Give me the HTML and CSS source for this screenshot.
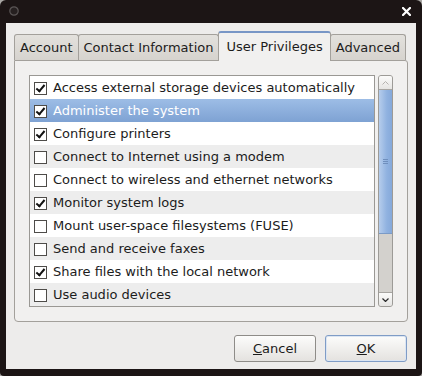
FILE: index.html
```html
<!DOCTYPE html>
<html lang="en">
<head>
  <meta charset="UTF-8" />
  <title>User Privileges</title>
  <link rel="stylesheet" href="styles.css">
</head>
<body>
  <div class="window">
    <div class="titlebar">
      <svg class="menu-icon" width="10" height="10" viewBox="0 0 10 10">
        <circle cx="5" cy="5" r="4.2" fill="#262020" stroke="#5a5555" stroke-width="1.2"/>
      </svg>
      <svg class="close-icon" width="9" height="9" viewBox="0 0 9 9">
        <path d="M1 1 L8 8 M8 1 L1 8" stroke="#fff" stroke-width="2.2" stroke-linecap="square"/>
      </svg>
    </div>

    <div class="dialog">
      <div class="notebook">
        <div class="tabs">
          <div class="tab">Account</div>
          <div class="tab">Contact Information</div>
          <div class="tab active">User Privileges</div>
          <div class="tab">Advanced</div>
        </div>

        <div class="panel">
          <div class="list">
            <div class="row"><span class="check on"></span>Access external storage devices automatically</div>
            <div class="row selected"><span class="check on"></span>Administer the system</div>
            <div class="row"><span class="check on"></span>Configure printers</div>
            <div class="row"><span class="check"></span>Connect to Internet using a modem</div>
            <div class="row"><span class="check"></span>Connect to wireless and ethernet networks</div>
            <div class="row"><span class="check on"></span>Monitor system logs</div>
            <div class="row"><span class="check"></span>Mount user-space filesystems (FUSE)</div>
            <div class="row"><span class="check"></span>Send and receive faxes</div>
            <div class="row"><span class="check on"></span>Share files with the local network</div>
            <div class="row"><span class="check"></span>Use audio devices</div>
          </div>

          <div class="scrollbar">
            <div class="arrow up">
              <svg width="7" height="4" viewBox="0 0 7 4"><path d="M0.5 3.5 L3.5 0.5 L6.5 3.5" fill="none" stroke="#b4b2ae" stroke-width="1"/></svg>
            </div>
            <div class="thumb"><span class="grip"></span></div>
            <div class="trough"></div>
            <div class="arrow down">
              <svg width="7" height="4" viewBox="0 0 7 4"><path d="M0.5 0.5 L3.5 3.5 L6.5 0.5" fill="none" stroke="#2a2a2a" stroke-width="1.2"/></svg>
            </div>
          </div>
        </div>
      </div>

      <div class="buttons">
        <button class="btn"><u>C</u>ancel</button>
        <button class="btn default"><u>O</u>K</button>
      </div>
    </div>
  </div>
</body>
</html>
```

FILE: styles.css
```css
* { margin: 0; padding: 0; box-sizing: border-box; }
body { background: #a9a7a4; font-family: 'DejaVu Sans', sans-serif; font-size: 13px; color: #1c1c1c; }

.window {
  width: 422px;
  height: 376px;
  background: #1c1515;
  border-radius: 6px 6px 4px 4px;
  padding: 0 6px 7px;
  display: flex;
  flex-direction: column;
}

.titlebar {
  height: 23px;
  display: flex;
  justify-content: space-between;
  align-items: center;
  padding: 0 5px 1px 3px;
}

.dialog {
  flex: 1;
  background: #edeceb;
  padding: 8px 8px 7px;
  display: flex;
  flex-direction: column;
}

/* notebook */
.tabs {
  display: flex;
  align-items: flex-end;
  height: 29px;
}

.tab {
  height: 26px;
  line-height: 25px;
  padding: 0 5px;
  border: 1px solid #a3a09b;
  border-bottom: none;
  border-radius: 3px 3px 0 0;
  background: linear-gradient(#e3e1dd, #d6d3ce);
  margin-left: -1px;
  white-space: nowrap;
}

.tab:first-child { margin-left: 0; }

.tab.active {
  height: 30px;
  line-height: 27px;
  padding: 0 7px;
  margin-bottom: -1px;
  background: #f1f0ef;
  border-top: 2px solid #7896c6;
  position: relative;
  z-index: 1;
}

.panel {
  height: 262px;
  background: #f1f0ef;
  border: 1px solid #a3a09b;
  border-radius: 0 3px 4px 4px;
  padding: 14px;
  display: flex;
  gap: 3px;
}

.list {
  width: 346px;
  border: 1px solid #9a9894;
  background: #fff;
}

.row {
  height: 23px;
  display: flex;
  align-items: center;
  padding-left: 4px;
  white-space: nowrap;
}

.row:nth-child(even) { background: #ededed; }

.row.selected {
  background: linear-gradient(#9dbde6, #7ea2d3);
  color: #fff;
}

.check {
  width: 13px;
  height: 13px;
  border: 1px solid #4e4c49;
  background: #fff;
  margin-right: 6px;
  margin-top: 1px;
  flex-shrink: 0;
  position: relative;
}

.check.on::after {
  content: "";
  position: absolute;
  left: 3px;
  top: 0px;
  width: 3px;
  height: 7px;
  border: solid #111;
  border-width: 0 2px 2px 0;
  transform: rotate(40deg);
}

/* scrollbar */
.scrollbar {
  width: 15px;
  display: flex;
  flex-direction: column;
  border: 1px solid #9d9b97;
  border-radius: 3px;
  overflow: hidden;
  background: #d3d1cd;
}

.arrow {
  height: 14px;
  display: flex;
  align-items: center;
  justify-content: center;
  background: linear-gradient(#fbfbfa, #e6e5e3);
}

.arrow.up { border-bottom: 1px solid #a7a5a1; }
.arrow.down { border-top: 1px solid #a7a5a1; margin-top: auto; }

.thumb {
  height: 144px;
  background: linear-gradient(90deg, #b6cdec, #90b2e0 60%, #86a9da);
  border-bottom: 1px solid #7b9bc7;
  display: flex;
  align-items: center;
  justify-content: center;
}

.grip {
  width: 5px;
  height: 5px;
  border-top: 1px solid #6f8fbd;
  border-bottom: 1px solid #6f8fbd;
  position: relative;
}

.grip::after {
  content: "";
  position: absolute;
  left: 0;
  right: 0;
  top: 1px;
  border-top: 1px solid #6f8fbd;
}

.trough { flex: 1; }

/* buttons */
.buttons {
  margin-top: 13px;
  display: flex;
  justify-content: flex-end;
  gap: 9px;
  padding-right: 1px;
}

.btn {
  width: 82px;
  height: 27px;
  font-family: 'DejaVu Sans', sans-serif;
  font-size: 13px;
  color: #1c1c1c;
  background: linear-gradient(#fcfcfb, #e4e2df);
  border: 1px solid #8e8c88;
  border-radius: 3px;
}

.btn.default {
  border-color: #7f9cc6;
  box-shadow: inset 0 0 0 1px #dbe5f2;
}
```
